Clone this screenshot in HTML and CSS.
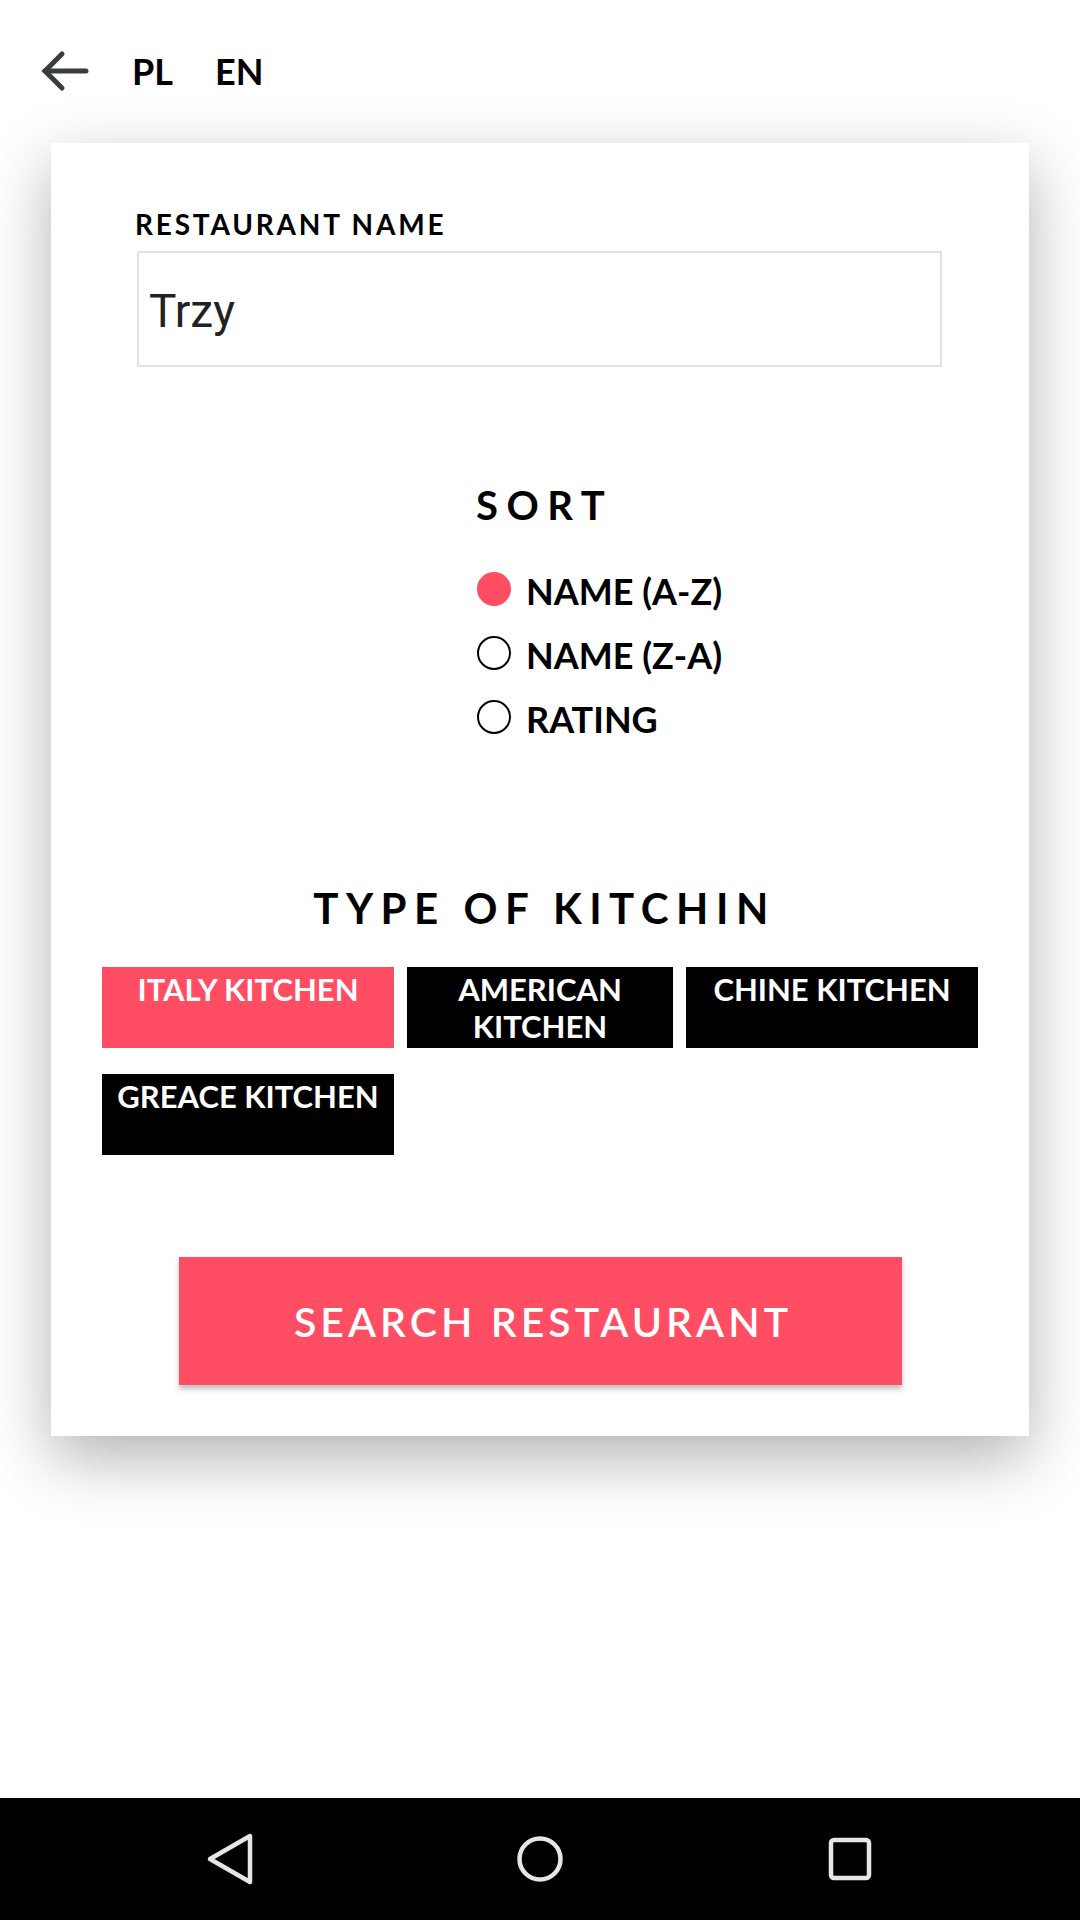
FILE: index.html
```html
<!DOCTYPE html>
<html lang="en">
<head>
<meta charset="utf-8">
<title>Search restaurant</title>
<link rel="stylesheet" href="styles.css">
</head>
<body>
<div class="screen">
  <header class="topbar">
    <svg class="back" width="50" height="42" viewBox="0 0 50 42" aria-hidden="true">
      <path d="M5 21 H46" fill="none" stroke="#3a3d3d" stroke-width="5" stroke-linecap="round"/>
      <path d="M22 4 L5 21 L22 38" fill="none" stroke="#3a3d3d" stroke-width="5" stroke-linecap="round" stroke-linejoin="miter"/>
    </svg>
    <span class="lang">PL</span>
    <span class="lang">EN</span>
  </header>

  <main class="card">
    <section class="field">
      <label class="field-label" for="name">RESTAURANT NAME</label>
      <input class="field-input" id="name" type="text" value="Trzy">
    </section>

    <section class="sort">
      <h2 class="sort-title">SORT</h2>
      <div class="radio-row"><span class="radio checked"></span><span class="radio-label">NAME (A-Z)</span></div>
      <div class="radio-row"><span class="radio"></span><span class="radio-label">NAME (Z-A)</span></div>
      <div class="radio-row"><span class="radio"></span><span class="radio-label">RATING</span></div>
    </section>

    <section class="kitchen">
      <h2 class="kitchen-title">TYPE OF KITCHIN</h2>
      <div class="chips">
        <div class="chip active wide">ITALY KITCHEN</div>
        <div class="chip narrow">AMERICAN KITCHEN</div>
        <div class="chip wide">CHINE KITCHEN</div>
        <div class="chip wide">GREACE KITCHEN</div>
      </div>
    </section>

    <div class="actions">
      <button class="search-btn" type="button">SEARCH RESTAURANT</button>
    </div>
  </main>

  <div class="spacer"></div>

  <nav class="navbar">
    <svg class="nav-icon" width="60" height="60" viewBox="0 0 60 60" aria-hidden="true">
      <path d="M50 7 L50 53 L10 30 Z" fill="none" stroke="#e6e6e6" stroke-width="4.5" stroke-linejoin="round"/>
    </svg>
    <svg class="nav-icon" width="60" height="60" viewBox="0 0 60 60" aria-hidden="true">
      <circle cx="30" cy="30" r="20.5" fill="none" stroke="#e6e6e6" stroke-width="4.5"/>
    </svg>
    <svg class="nav-icon" width="60" height="60" viewBox="0 0 60 60" aria-hidden="true">
      <rect x="11" y="11" width="38" height="38" rx="3" fill="none" stroke="#e6e6e6" stroke-width="4.5"/>
    </svg>
  </nav>
</div>
</body>
</html>
```

FILE: styles.css
```css
* { box-sizing: border-box; }

html, body {
  margin: 0;
  padding: 0;
  background: #ffffff;
}

body {
  font-family: "Lato", "Noto Sans", sans-serif;
  color: #000;
}

.screen {
  width: 1080px;
  height: 1920px;
  display: flex;
  flex-direction: column;
  overflow: hidden;
}

/* top bar */
.topbar {
  height: 143px;
  padding: 0 0 1px 40px;
  display: flex;
  align-items: center;
  flex-shrink: 0;
}

.back {
  display: block;
  margin-right: 42px;
}

.lang {
  font-weight: 700;
  font-size: 36px;
  line-height: 40px;
  margin-right: 42px;
}

/* card */
.card {
  margin: 0 51px;
  background: #fff;
  box-shadow: 0 22px 60px rgba(0, 0, 0, 0.3);
  padding: 64px 0 51px;
  flex-shrink: 0;
}

.field {
  padding: 0 87px 0 86px;
}

.field-label {
  display: block;
  font-weight: 700;
  font-size: 28px;
  line-height: 34px;
  letter-spacing: 2.8px;
  margin: 0 0 10px -2px;
}

.field-input {
  display: block;
  width: 100%;
  height: 116px;
  border: 2px solid #e2e2e2;
  background: #fff;
  padding: 3px 0 0 10px;
  font-family: "Roboto", "Noto Sans", sans-serif;
  font-size: 46px;
  color: #212121;
  outline: none;
}

/* sort */
.sort {
  margin-top: 114px;
  padding-left: 425px;
}

.sort-title {
  margin: 0 0 28px;
  font-weight: 700;
  font-size: 40px;
  line-height: 48px;
  letter-spacing: 8.5px;
}

.radio-row {
  display: flex;
  align-items: center;
  height: 64px;
}

.radio {
  width: 34px;
  height: 34px;
  border-radius: 50%;
  border: 2.5px solid #000;
  margin: 0 15px 0 1px;
  flex-shrink: 0;
}

.radio.checked {
  border: none;
  background: #ff4d63;
}

.radio-label {
  font-weight: 700;
  font-size: 36px;
  line-height: 40px;
  padding-top: 3px;
}

/* kitchen */
.kitchen {
  margin-top: 134px;
}

.kitchen-title {
  margin: 0 0 34px;
  text-align: center;
  font-weight: 700;
  font-size: 42px;
  line-height: 50px;
  letter-spacing: 7.5px;
  padding-left: 9px;
}

.chips {
  display: flex;
  flex-wrap: wrap;
  gap: 26px 13px;
  padding: 0 51px;
}

.chip {
  height: 81px;
  background: #000;
  color: #fff;
  font-weight: 700;
  font-size: 31px;
  line-height: 37px;
  text-align: center;
  padding: 4px 6px 0;
}

.chip.wide { width: 292px; }
.chip.narrow { width: 266px; }
.chip.active { background: #ff4d63; }

/* action */
.actions {
  margin-top: 102px;
  display: flex;
  justify-content: center;
}

.search-btn {
  width: 723px;
  height: 128px;
  border: none;
  background: #ff4d63;
  color: #fff;
  font-family: "Lato", "Noto Sans", sans-serif;
  font-weight: 600;
  font-size: 41px;
  letter-spacing: 4px;
  padding: 0 0 0 6px;
  box-shadow: 0 4px 5px rgba(0, 0, 0, 0.25);
}

.spacer { flex: 1; }

/* android nav bar */
.navbar {
  height: 122px;
  background: #000;
  display: flex;
  justify-content: center;
  align-items: center;
  gap: 250px;
  flex-shrink: 0;
}

.nav-icon { display: block; }
```
